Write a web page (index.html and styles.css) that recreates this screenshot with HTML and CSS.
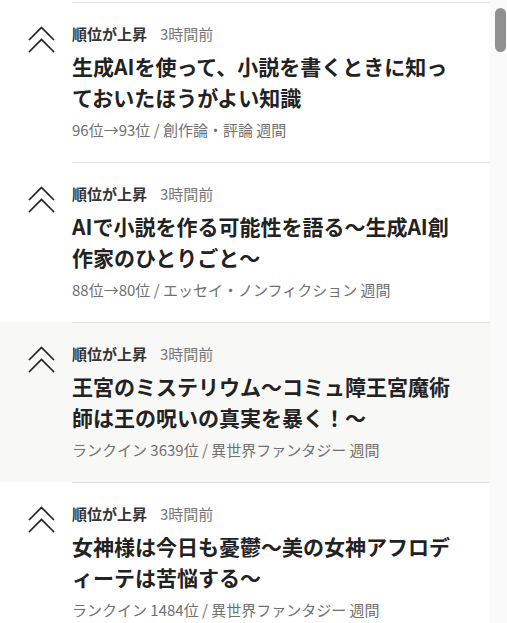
FILE: index.html
```html
<!DOCTYPE html>
<html lang="ja">
<head>
    <meta charset="UTF-8">
    <meta name="viewport" content="width=device-width, initial-scale=1.0">
    <title>ランキング</title>
    <link rel="stylesheet" href="styles.css">
</head>
<body>

    <div class="page">
        <ul class="ranking">
            <li class="rank-item">
                <div class="rank-icon">
                    <svg width="27" height="27" viewBox="0 0 27 27"><path d="M1 14 L13.5 1.5 L26 14 M1 26 L13.5 13.5 L26 26" fill="none" stroke="#222" stroke-width="1.7"/></svg>
                </div>
                <div class="rank-body">
                    <p class="rank-meta"><span class="rank-label">順位が上昇</span><span class="rank-time">3時間前</span></p>
                    <a class="rank-title" href="#">生成AIを使って、小説を書くときに知っておいたほうがよい知識</a>
                    <p class="rank-info">96位→93位 / 創作論・評論 週間</p>
                </div>
            </li>
            <li class="rank-item">
                <div class="rank-icon">
                    <svg width="27" height="27" viewBox="0 0 27 27"><path d="M1 14 L13.5 1.5 L26 14 M1 26 L13.5 13.5 L26 26" fill="none" stroke="#222" stroke-width="1.7"/></svg>
                </div>
                <div class="rank-body">
                    <p class="rank-meta"><span class="rank-label">順位が上昇</span><span class="rank-time">3時間前</span></p>
                    <a class="rank-title" href="#">AIで小説を作る可能性を語る〜生成AI創作家のひとりごと〜</a>
                    <p class="rank-info">88位→80位 / エッセイ・ノンフィクション 週間</p>
                </div>
            </li>
            <li class="rank-item hover">
                <div class="rank-icon">
                    <svg width="27" height="27" viewBox="0 0 27 27"><path d="M1 14 L13.5 1.5 L26 14 M1 26 L13.5 13.5 L26 26" fill="none" stroke="#222" stroke-width="1.7"/></svg>
                </div>
                <div class="rank-body">
                    <p class="rank-meta"><span class="rank-label">順位が上昇</span><span class="rank-time">3時間前</span></p>
                    <a class="rank-title" href="#">王宮のミステリウム〜コミュ障王宮魔術師は王の呪いの真実を暴く！〜</a>
                    <p class="rank-info">ランクイン 3639位 / 異世界ファンタジー 週間</p>
                </div>
            </li>
            <li class="rank-item">
                <div class="rank-icon">
                    <svg width="27" height="27" viewBox="0 0 27 27"><path d="M1 14 L13.5 1.5 L26 14 M1 26 L13.5 13.5 L26 26" fill="none" stroke="#222" stroke-width="1.7"/></svg>
                </div>
                <div class="rank-body">
                    <p class="rank-meta"><span class="rank-label">順位が上昇</span><span class="rank-time">3時間前</span></p>
                    <a class="rank-title" href="#">女神様は今日も憂鬱〜美の女神アフロディーテは苦悩する〜</a>
                    <p class="rank-info">ランクイン 1484位 / 異世界ファンタジー 週間</p>
                </div>
            </li>
        </ul>
        <div class="scrollbar"><div class="scrollbar-thumb"></div></div>
    </div>

</body>
</html>
```

FILE: styles.css
```css
body {
    margin: 0;
    font-family: "Noto Sans CJK JP", "Noto Sans", sans-serif;
    color: #222;
    background: #fff;
    overflow: hidden;
    height: 623px;
}
.page {
    display: flex;
    height: 623px;
}
.ranking {
    list-style: none;
    margin: 0;
    padding: 2px 0 0;
    width: 490px;
    flex: none;
}
.rank-item {
    display: flex;
    height: 160px;
}
.rank-item.hover {
    background: #f8f8f7;
}
.rank-icon {
    width: 44px;
    padding: 24px 0 0 28px;
    flex: none;
}
.rank-icon svg {
    display: block;
}
.rank-body {
    flex: 1;
    border-top: 1px solid #e0e0e0;
    padding: 21px 24px 0 0;
}
.rank-meta {
    margin: 0;
    font-size: 15px;
    line-height: 20px;
}
.rank-label {
    font-weight: bold;
    color: #333;
    margin-right: 13px;
}
.rank-time {
    color: #777;
}
.rank-title {
    display: block;
    margin-top: 7px;
    font-size: 21px;
    line-height: 31px;
    font-weight: bold;
    color: #222;
    text-decoration: none;
    line-break: normal;
}
.rank-info {
    margin: 7px 0 0;
    font-size: 15px;
    line-height: 20px;
    color: #707070;
}
.scrollbar {
    flex: 1;
    background: #fafafa;
    padding: 8px 1px 0 5px;
}
.scrollbar-thumb {
    height: 44px;
    border-radius: 6px;
    background: #909090;
}
```
